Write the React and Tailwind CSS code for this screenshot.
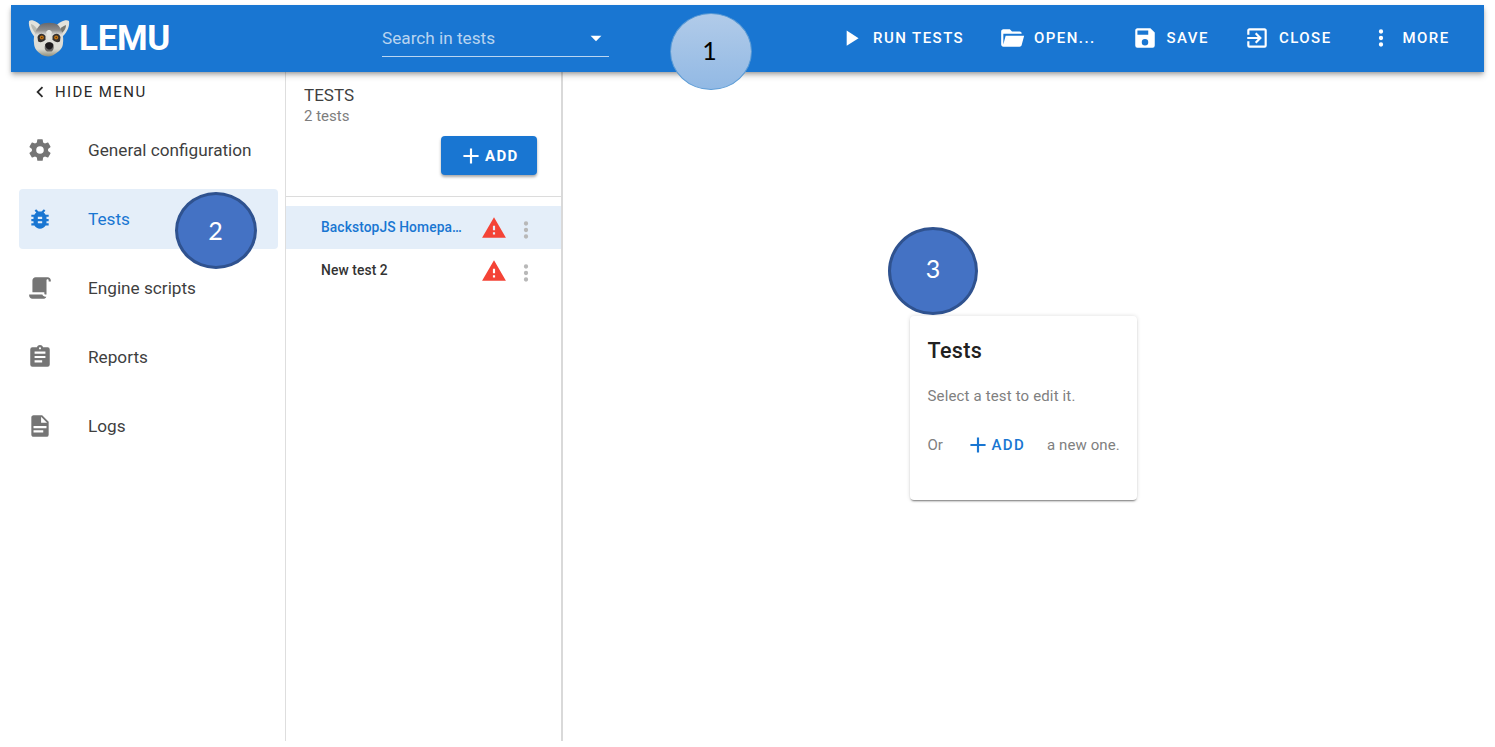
const icons = {
  play: 'M8,5.14V19.14L19,12.14L8,5.14Z',
  folder: 'M19,20H4C2.89,20 2,19.1 2,18V6C2,4.89 2.89,4 4,4H10L12,6H19A2,2 0 0,1 21,8H21L4,8V18L6.14,10H23.21L20.93,18.5C20.7,19.37 19.92,20 19,20Z',
  save: 'M15,9H5V5H15M12,19A3,3 0 0,1 9,16A3,3 0 0,1 12,13A3,3 0 0,1 15,16A3,3 0 0,1 12,19M17,3H5C3.89,3 3,3.9 3,5V19A2,2 0 0,0 5,21H19A2,2 0 0,0 21,19V7L17,3Z',
  exit: 'M19,3H5C3.89,3 3,3.89 3,5V9H5V5H19V19H5V15H3V19A2,2 0 0,0 5,21H19A2,2 0 0,0 21,19V5C21,3.89 20.1,3 19,3M10.08,15.58L11.5,17L16.5,12L11.5,7L10.08,8.41L12.67,11H3V13H12.67L10.08,15.58Z',
  dots: 'M12,16A2,2 0 0,1 14,18A2,2 0 0,1 12,20A2,2 0 0,1 10,18A2,2 0 0,1 12,16M12,10A2,2 0 0,1 14,12A2,2 0 0,1 12,14A2,2 0 0,1 10,12A2,2 0 0,1 12,10M12,4A2,2 0 0,1 14,6A2,2 0 0,1 12,8A2,2 0 0,1 10,6A2,2 0 0,1 12,4Z',
  left: 'M15.41,16.58L10.83,12L15.41,7.41L14,6L8,12L14,18L15.41,16.58Z',
  cog: 'M12,15.5A3.5,3.5 0 0,1 8.5,12A3.5,3.5 0 0,1 12,8.5A3.5,3.5 0 0,1 15.5,12A3.5,3.5 0 0,1 12,15.5M19.43,12.97C19.47,12.65 19.5,12.33 19.5,12C19.5,11.67 19.47,11.34 19.43,11L21.54,9.37C21.73,9.22 21.78,8.95 21.66,8.73L19.66,5.27C19.54,5.05 19.27,4.96 19.05,5.05L16.56,6.05C16.04,5.66 15.5,5.32 14.87,5.07L14.5,2.42C14.46,2.18 14.25,2 14,2H10C9.75,2 9.54,2.18 9.5,2.42L9.13,5.07C8.5,5.32 7.96,5.66 7.44,6.05L4.95,5.05C4.73,4.96 4.46,5.05 4.34,5.27L2.34,8.73C2.21,8.95 2.27,9.22 2.46,9.37L4.57,11C4.53,11.34 4.5,11.67 4.5,12C4.5,12.33 4.53,12.65 4.57,12.97L2.46,14.63C2.27,14.78 2.21,15.05 2.34,15.27L4.34,18.73C4.46,18.95 4.73,19.03 4.95,18.95L7.44,17.94C7.96,18.34 8.5,18.68 9.13,18.93L9.5,21.58C9.54,21.82 9.75,22 10,22H14C14.25,22 14.46,21.82 14.5,21.58L14.87,18.93C15.5,18.67 16.04,18.34 16.56,17.94L19.05,18.95C19.27,19.03 19.54,18.95 19.66,18.73L21.66,15.27C21.78,15.05 21.73,14.78 21.54,14.63L19.43,12.97Z',
  bug: 'M14,12H10V10H14M14,16H10V14H14M20,8H17.19C16.74,7.22 16.12,6.55 15.37,6.04L17,4.41L15.59,3L13.42,5.17C12.96,5.06 12.5,5 12,5C11.5,5 11.04,5.06 10.59,5.17L8.41,3L7,4.41L8.62,6.04C7.88,6.55 7.26,7.22 6.81,8H4V10H6.09C6.04,10.33 6,10.66 6,11V12H4V14H6V15C6,15.34 6.04,15.67 6.09,16H4V18H6.81C7.85,19.79 9.78,21 12,21C14.22,21 16.15,19.79 17.19,18H20V16H17.91C17.96,15.67 18,15.34 18,15V14H20V12H18V11C18,10.66 17.96,10.33 17.91,10H20V8Z',
  script: 'M17.8,20C17.4,21.2 16.3,22 15,22H5C3.3,22 2,20.7 2,19V18H5L14.2,18C14.6,19.2 15.7,20 17,20H17.8M19,2C20.7,2 22,3.3 22,5V6H20V5C20,4.4 19.6,4 19,4C18.4,4 18,4.4 18,5V18H17C16.4,18 16,17.6 16,17V16H5V5C5,3.3 6.3,2 8,2H19Z',
  clipboard: 'M17,9H7V7H17M17,13H7V11H17M14,17H7V15H14M12,3A1,1 0 0,1 13,4A1,1 0 0,1 12,5A1,1 0 0,1 11,4A1,1 0 0,1 12,3M19,3H14.82C14.4,1.84 13.3,1 12,1C10.7,1 9.6,1.84 9.18,3H5A2,2 0 0,0 3,5V19A2,2 0 0,0 5,21H19A2,2 0 0,0 21,19V5A2,2 0 0,0 19,3Z',
  file: 'M13,9H18.5L13,3.5V9M6,2H14L20,8V20A2,2 0 0,1 18,22H6C4.89,22 4,21.1 4,20V4C4,2.89 4.89,2 6,2M15,18V16H6V18H15M18,14V12H6V14H18Z',
  plus: 'M19,13H13V19H11V13H5V11H11V5H13V11H19V13Z',
  alert: 'M13,14H11V10H13M13,18H11V16H13M1,21H23L12,2L1,21Z',
  down: 'M7,10L12,15L17,10H7Z',
};

function Icon({ name, className = 'size-[26px]' }) {
  return (
    <svg viewBox="0 0 24 24" fill="currentColor" className={`shrink-0 ${className}`}>
      <path d={icons[name]} />
    </svg>
  );
}

function Lemur() {
  return (
    <svg viewBox="0 0 42 40" className="h-10 w-[42px] shrink-0">
      <defs>
        <linearGradient id="fur" x1="0" y1="0" x2="0" y2="1">
          <stop offset="0" stopColor="#68686b" />
          <stop offset="0.22" stopColor="#8d8d8d" />
          <stop offset="0.36" stopColor="#e0dfda" />
          <stop offset="0.78" stopColor="#dddcd4" />
          <stop offset="1" stopColor="#8f8e7a" />
        </linearGradient>
      </defs>
      <path d="M1 2C4 0 10 3 13 7L8 19C4 16 0 8 1 2Z" fill="#e2e2dc" />
      <path d="M41 2C38 0 31 3 28 7L33 19C38 15 42 8 41 2Z" fill="#e2e2dc" />
      <path d="M3 5C6 6 9 9 10 12L7 14C5 11 3 8 3 5Z" fill="#b9bab2" />
      <path d="M38 6C35 7 32 9 31 12L34 14C37 11 38 9 38 6Z" fill="#777872" />
      <path d="M12 6C16 3 26 3 30 6C34 10 36 18 35 24C35 30 30 33 27 35C24 38 18 38 14 36C10 33 6 30 6 24C5 17 8 10 12 6Z" fill="url(#fur)" />
      <path d="M18 13L21 22L24 13L22 11L20 11Z" fill="#e6e6e2" />
      <path d="M9.500 18C11 14 15 14 17.500 17L17.500 20.500C15 23.500 11 24 10 22Z" fill="#37322f" />
      <path d="M32.500 18C31 14 27 14 24.500 17L24.500 20.500C27 23.500 31 24 32 22Z" fill="#37322f" />
      <circle cx="13.8" cy="18.5" r="2" fill="#c77712" />
      <circle cx="28.200" cy="18.5" r="2" fill="#c77712" />
      <circle cx="13.8" cy="18.5" r="0.7" fill="#4a2a08" />
      <circle cx="28.200" cy="18.5" r="0.7" fill="#4a2a08" />
      <path d="M17.500 25C19 22.500 23.500 22.500 25 25C26.500 28.500 25.500 31 23.500 32.500L19 32.500C16.500 31 16 28.500 17.500 25Z" fill="#666462" />
      <path d="M17.300 25.500C19 22.500 23.700 22.500 25.200 25.500C25.500 28.500 22.800 30.500 21.300 30.500C20 30.500 17 28.500 17.300 25.500Z" fill="#1e1b1d" />
    </svg>
  );
}

const actions = [
  ['play', 'RUN TESTS'],
  ['folder', 'OPEN...'],
  ['save', 'SAVE'],
  ['exit', 'CLOSE'],
  ['dots', 'MORE'],
];

const menu = [
  ['cog', 'General configuration'],
  ['bug', 'Tests'],
  ['script', 'Engine scripts'],
  ['clipboard', 'Reports'],
  ['file', 'Logs'],
];

const tests = ['BackstopJS Homepa…', 'New test 2'];

export default function App() {
  return (
    <div className="relative flex h-[747px] w-[1495px] flex-col overflow-hidden bg-white pt-[5px] pr-[11px] pb-[6px] pl-[11px] font-['Roboto',sans-serif] text-[#3f3f3f]">
      <header className="z-10 flex h-[67px] shrink-0 items-center bg-[#1976d2] pl-[17px] text-white shadow-[0_2px_4px_-1px_rgba(0,0,0,0.3),0_4px_6px_0_rgba(0,0,0,0.18)]">
        <Lemur />
        <h1 className="ml-[9px] w-[303px] text-[35px] leading-none font-bold tracking-[-0.3px]">LEMU</h1>
        <div className="flex h-[37px] w-[227px] items-center justify-between border-b border-white/70">
          <span className="pt-px text-[17.2px] text-white/70">Search in tests</span>
          <Icon name="down" />
        </div>
        <nav className="ml-auto grid w-[646px] grid-cols-[161px_132.5px_112.5px_123.5px_auto] pb-px text-[15px] font-medium tracking-[1.45px]">
          {actions.map(([icon, label]) => (
            <button key={label} className="flex items-center gap-[9px] whitespace-nowrap">
              <Icon name={icon} />
              <span className="pt-px">{label}</span>
            </button>
          ))}
        </nav>
      </header>

      <div className="flex min-h-0 flex-1">
        <aside className="flex w-[275px] shrink-0 flex-col border-r border-[#dedede] pr-[7px] pl-[8px]">
          <button className="flex h-[39px] items-center gap-[5px] pl-[11px] text-[15px] tracking-[1.4px] text-[#2a2a2a]">
            <Icon name="left" className="-mx-px size-[22px]" />
            <span className="pt-px">HIDE MENU</span>
          </button>
          <ul className="mt-[9px] flex flex-col gap-[9px]">
            {menu.map(([icon, label]) => (
              <li
                key={label}
                className={`flex h-[60px] items-center gap-[35px] rounded pl-[8px] text-[17.200px] ${label === 'Tests' ? 'bg-[#e4eef9] text-[#1976d2]' : ''}`}
              >
                <Icon name={icon} className={label === 'Tests' ? 'size-[26px]' : 'size-[26px] text-[#757575]'} />
                <span className="pt-[2px]">{label}</span>
              </li>
            ))}
          </ul>
        </aside>

        <section className="flex w-[277px] shrink-0 flex-col border-r-2 border-[#d9d9d9]">
          <div className="flex h-[125px] shrink-0 flex-col border-b border-[#dcdcdc] pt-[13px] pl-[18px]">
            <h2 className="text-[17px] leading-[20px]">TESTS</h2>
            <p className="text-[15px] leading-[22px] text-[#7d7d7d]">2 tests</p>
            <button className="mt-[9px] mr-[24px] flex h-[39px] w-[96px] items-center gap-px self-end rounded bg-[#1976d2] pl-[17px] text-[15px] font-bold tracking-[1.3px] text-white shadow-[0_2px_3px_rgba(0,0,0,0.35)]">
              <Icon name="plus" className="size-[26px]" />
              <span className="pt-px">ADD</span>
            </button>
          </div>
          <ul className="mt-[9px]">
            {tests.map((name, i) => (
              <li
                key={name}
                className={`flex h-[43px] items-center pl-[35px] text-[13.8px] font-medium tracking-[0.1px] ${i === 0 ? 'bg-[#e4eef9] text-[#1976d2]' : 'text-[#333333]'}`}
              >
                <span className="w-[143px] whitespace-nowrap">{name}</span>
                <Icon name="alert" className="ml-[17px] size-[26px] text-[#f44336]" />
                <Icon name="dots" className="mt-[4px] ml-[6px] size-[26px] text-[#b8b8b8]" />
              </li>
            ))}
          </ul>
        </section>

        <main className="flex min-w-0 flex-1 justify-center pt-[244px]">
          <div className="h-[184px] w-[227px] rounded bg-white pt-[22px] pl-[17.500px] text-[15px] text-[#808080] shadow-[0_2px_2px_-1px_rgba(0,0,0,0.5),0_0_4px_rgba(0,0,0,0.14)]">
            <h3 className="text-[21.500px] leading-[26px] font-medium tracking-[0.35px] text-[#212121]">Tests</h3>
            <p className="mt-[21px] leading-[22px] tracking-[0.15px]">Select a test to edit it.</p>
            <div className="mt-[18px] flex h-[40px] items-center whitespace-nowrap">
              <span className="w-[37px]">Or</span>
              <button className="flex w-[82.500px] items-center gap-[1px] font-medium tracking-[1.35px] text-[#1976d2]">
                <Icon name="plus" />
                <span className="pt-px">ADD</span>
              </button>
              <span className="tracking-[0.1px]">a new one.</span>
            </div>
          </div>
        </main>
      </div>

      <div className="absolute top-[13px] left-[670px] z-20 flex h-[77px] w-[82px] items-center justify-center rounded-[50%] border border-[#5b9bd5] bg-linear-to-b from-[#b1cbe9] to-[#92b9e4] pr-[3px] pb-[2px] font-['Lato',sans-serif] text-[25px] text-black">
        1
      </div>
      <div className="absolute top-[192px] left-[175px] z-20 flex h-[77px] w-[82px] items-center justify-center rounded-[50%] border-3 border-[#2f528f] bg-[#4472c4] pr-px font-['Lato',sans-serif] text-[25px] text-white">
        2
      </div>
      <div className="absolute top-[227px] left-[888px] z-20 flex h-[88px] w-[90px] items-center justify-center rounded-[50%] border-3 border-[#2f528f] bg-[#4472c4] pb-[4px] font-['Lato',sans-serif] text-[25px] text-white">
        3
      </div>
    </div>
  );
}
